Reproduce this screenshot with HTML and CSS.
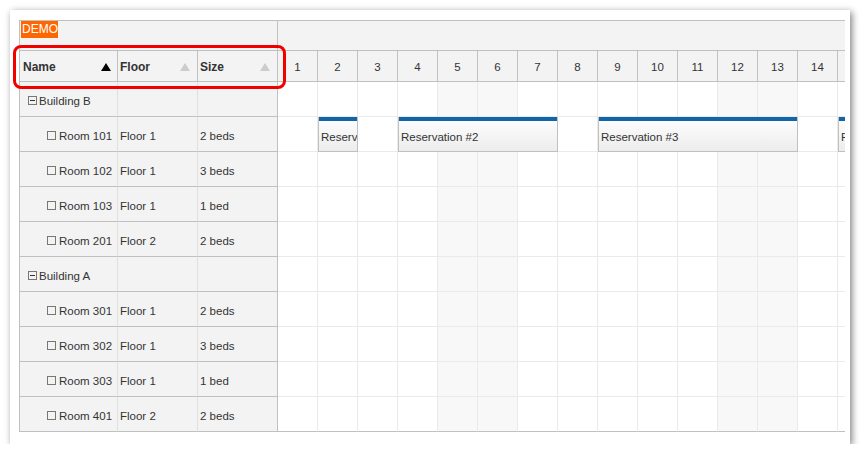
FILE: index.html
```html
<!DOCTYPE html>
<html>
<head>
<meta charset="utf-8">
<link rel="stylesheet" href="styles.css">
</head>
<body>
<div class="card">
  <div class="sched">
    <div class="hrow1">
      <div class="corner"><span class="demo">DEMO</span></div>
      <div class="hfill"></div>
    </div>
    <div class="hrow2">
      <div class="hcol name">Name<i class="sort on"></i></div>
      <div class="hcol floor">Floor<i class="sort"></i></div>
      <div class="hcol size">Size<i class="sort"></i></div>
      <div class="days">
        <div class="day">1</div><div class="day">2</div><div class="day">3</div><div class="day">4</div><div class="day">5</div><div class="day">6</div><div class="day">7</div><div class="day">8</div><div class="day">9</div><div class="day">10</div><div class="day">11</div><div class="day">12</div><div class="day">13</div><div class="day">14</div><div class="day">15</div>
      </div>
    </div>

    <div class="row">
      <div class="c name parent"><span class="tog"></span>Building B</div><div class="c floor"></div><div class="c size"></div>
      <div class="tl"><span class="g"></span><span class="g"></span><span class="g"></span><span class="g"></span><span class="g we"></span><span class="g we"></span><span class="g"></span><span class="g"></span><span class="g"></span><span class="g"></span><span class="g"></span><span class="g we"></span><span class="g we"></span><span class="g"></span><span class="g"></span></div>
    </div>
    <div class="row">
      <div class="c name child"><span class="leaf"></span>Room 101</div><div class="c floor">Floor 1</div><div class="c size">2 beds</div>
      <div class="tl"><span class="g"></span><span class="g"></span><span class="g"></span><span class="g"></span><span class="g we"></span><span class="g we"></span><span class="g"></span><span class="g"></span><span class="g"></span><span class="g"></span><span class="g"></span><span class="g we"></span><span class="g we"></span><span class="g"></span><span class="g"></span>
        <div class="ev e1"><div class="bar"></div><div class="txt">Reservation #1</div></div>
        <div class="ev e2"><div class="bar"></div><div class="txt">Reservation #2</div></div>
        <div class="ev e3"><div class="bar"></div><div class="txt">Reservation #3</div></div>
        <div class="ev e4"><div class="bar"></div><div class="txt">Reservation #4</div></div>
      </div>
    </div>
    <div class="row">
      <div class="c name child"><span class="leaf"></span>Room 102</div><div class="c floor">Floor 1</div><div class="c size">3 beds</div>
      <div class="tl"><span class="g"></span><span class="g"></span><span class="g"></span><span class="g"></span><span class="g we"></span><span class="g we"></span><span class="g"></span><span class="g"></span><span class="g"></span><span class="g"></span><span class="g"></span><span class="g we"></span><span class="g we"></span><span class="g"></span><span class="g"></span></div>
    </div>
    <div class="row">
      <div class="c name child"><span class="leaf"></span>Room 103</div><div class="c floor">Floor 1</div><div class="c size">1 bed</div>
      <div class="tl"><span class="g"></span><span class="g"></span><span class="g"></span><span class="g"></span><span class="g we"></span><span class="g we"></span><span class="g"></span><span class="g"></span><span class="g"></span><span class="g"></span><span class="g"></span><span class="g we"></span><span class="g we"></span><span class="g"></span><span class="g"></span></div>
    </div>
    <div class="row">
      <div class="c name child"><span class="leaf"></span>Room 201</div><div class="c floor">Floor 2</div><div class="c size">2 beds</div>
      <div class="tl"><span class="g"></span><span class="g"></span><span class="g"></span><span class="g"></span><span class="g we"></span><span class="g we"></span><span class="g"></span><span class="g"></span><span class="g"></span><span class="g"></span><span class="g"></span><span class="g we"></span><span class="g we"></span><span class="g"></span><span class="g"></span></div>
    </div>
    <div class="row">
      <div class="c name parent"><span class="tog"></span>Building A</div><div class="c floor"></div><div class="c size"></div>
      <div class="tl"><span class="g"></span><span class="g"></span><span class="g"></span><span class="g"></span><span class="g we"></span><span class="g we"></span><span class="g"></span><span class="g"></span><span class="g"></span><span class="g"></span><span class="g"></span><span class="g we"></span><span class="g we"></span><span class="g"></span><span class="g"></span></div>
    </div>
    <div class="row">
      <div class="c name child"><span class="leaf"></span>Room 301</div><div class="c floor">Floor 1</div><div class="c size">2 beds</div>
      <div class="tl"><span class="g"></span><span class="g"></span><span class="g"></span><span class="g"></span><span class="g we"></span><span class="g we"></span><span class="g"></span><span class="g"></span><span class="g"></span><span class="g"></span><span class="g"></span><span class="g we"></span><span class="g we"></span><span class="g"></span><span class="g"></span></div>
    </div>
    <div class="row">
      <div class="c name child"><span class="leaf"></span>Room 302</div><div class="c floor">Floor 1</div><div class="c size">3 beds</div>
      <div class="tl"><span class="g"></span><span class="g"></span><span class="g"></span><span class="g"></span><span class="g we"></span><span class="g we"></span><span class="g"></span><span class="g"></span><span class="g"></span><span class="g"></span><span class="g"></span><span class="g we"></span><span class="g we"></span><span class="g"></span><span class="g"></span></div>
    </div>
    <div class="row">
      <div class="c name child"><span class="leaf"></span>Room 303</div><div class="c floor">Floor 1</div><div class="c size">1 bed</div>
      <div class="tl"><span class="g"></span><span class="g"></span><span class="g"></span><span class="g"></span><span class="g we"></span><span class="g we"></span><span class="g"></span><span class="g"></span><span class="g"></span><span class="g"></span><span class="g"></span><span class="g we"></span><span class="g we"></span><span class="g"></span><span class="g"></span></div>
    </div>
    <div class="row">
      <div class="c name child"><span class="leaf"></span>Room 401</div><div class="c floor">Floor 2</div><div class="c size">2 beds</div>
      <div class="tl"><span class="g"></span><span class="g"></span><span class="g"></span><span class="g"></span><span class="g we"></span><span class="g we"></span><span class="g"></span><span class="g"></span><span class="g"></span><span class="g"></span><span class="g"></span><span class="g we"></span><span class="g we"></span><span class="g"></span><span class="g"></span></div>
    </div>
  </div>
  <div class="annot"></div>
</div>
</body>
</html>
```

FILE: styles.css
```css
* { box-sizing: border-box; }
html, body { margin: 0; padding: 0; background: #fff; }
body {
  font-family: "Liberation Sans", Arial, sans-serif;
  font-size: 11.5px;
  color: #333;
}
.card {
  position: relative;
  margin: 10px 0 0 10px;
  width: 840px;
  height: 434px;
  padding: 10px 0 0 9px;
  background: #fff;
  box-shadow: 2px 2px 7px rgba(0,0,0,0.5);
}
.sched {
  width: 826px;
  border-top: 1px solid #c0c0c0;
  border-left: 1px solid #c0c0c0;
  overflow: hidden;
}
.hrow1 {
  display: flex;
  height: 30px;
  background: #f3f3f3;
  border-bottom: 1px solid #c0c0c0;
}
.corner {
  width: 258px;
  flex: none;
  border-right: 1px solid #c0c0c0;
  padding: 0 0 0 1px;
}
.demo {
  display: inline-block;
  background: #ff6600;
  color: #fff;
  font-size: 12px;
  height: 17px;
  line-height: 17px;
  padding: 0 1px;
  width: 37px;
  text-align: center;
}
.hfill { flex: 1; }
.hrow2 {
  display: flex;
  height: 31px;
  background: #f3f3f3;
  border-bottom: 1px solid #c0c0c0;
}
.hcol {
  flex: none;
  display: flex;
  align-items: center;
  justify-content: space-between;
  border-right: 1px solid #c0c0c0;
  font-weight: bold;
  font-size: 12px;
  color: #333;
  padding: 1px 7px 0 2px;
}
.hcol.name { width: 98px; padding-left: 3px; padding-right: 6px; }
.hcol.floor { width: 80px; }
.hcol.size { width: 80px; }
.sort {
  width: 0; height: 0;
  border-left: 5px solid transparent;
  border-right: 5px solid transparent;
  border-bottom: 8px solid #cccccc;
  margin-top: 1px;
}
.sort.on { border-bottom-color: #000; }
.days { display: flex; flex: 1; overflow: hidden; }
.day {
  flex: none;
  width: 40px;
  border-right: 1px solid #c0c0c0;
  display: flex;
  align-items: center;
  justify-content: center;
  padding-top: 1px;
  color: #333;
}
.row { display: flex; height: 35px; }
.c {
  flex: none;
  background: #f3f3f3;
  border-bottom: 1px solid #c0c0c0;
  border-right: 1px solid #e0e0e0;
  display: flex;
  align-items: center;
  padding: 3px 0 0 2px;
  white-space: nowrap;
}
.c.name { width: 98px; }
.c.floor { width: 80px; }
.c.size { width: 80px; border-right-color: #c0c0c0; }
.c.parent { padding-left: 8px; }
.c.child { padding-left: 27px; }
.tog, .leaf {
  flex: none;
  position: relative;
  width: 9px;
  height: 9px;
  border: 1px solid #777;
  margin-right: 2px;
  margin-top: -1px;
}
.leaf { margin-right: 3px; }
.tog::after {
  content: "";
  position: absolute;
  left: 1px; top: 3px;
  width: 5px; height: 1px;
  background: #333;
}
.tl { flex: 1; display: flex; position: relative; overflow: hidden; }
.g {
  flex: none;
  width: 40px;
  height: 35px;
  border-right: 1px solid #eaeaea;
  border-bottom: 1px solid #eaeaea;
  background: #fff;
}
.g.we { background: #f8f8f8; }
.row:last-child .g { border-bottom-color: #c0c0c0; }
.ev {
  position: absolute;
  top: 0;
  height: 35px;
  display: flex;
  flex-direction: column;
  border: 1px solid #c0c0c0;
  border-top: 0;
  background: linear-gradient(to bottom, #ffffff 0%, #ececec 100%);
  overflow: hidden;
  white-space: nowrap;
}
.bar { height: 4px; margin: 0 -1px; background: #1066a8; flex: none; }
.txt { flex: 1; display: flex; align-items: center; padding: 1px 0 0 2px; color: #333; }
.e1 { left: 40px; width: 40px; }
.e2 { left: 120px; width: 160px; }
.e3 { left: 320px; width: 200px; }
.e4 { left: 560px; width: 160px; }
.annot {
  position: absolute;
  left: 3px;
  top: 35px;
  width: 273px;
  height: 44px;
  border: 3px solid #f20000;
  border-radius: 8px;
}
```
